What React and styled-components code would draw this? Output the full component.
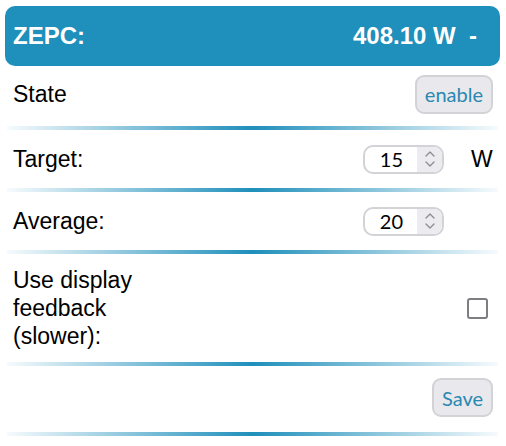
import React from "react";
import styled, { createGlobalStyle } from "styled-components";

const Global = createGlobalStyle`
  html, body { margin: 0; padding: 0; background: #ffffff; }
  body { font-family: "Liberation Sans", Arial, sans-serif; color: #000; }
`;

const Page = styled.div`
  padding: 6px 6px 0 5px;
  display: flex;
  flex-direction: column;
`;

const Header = styled.div`
  height: 60px;
  background: #1f8fbb;
  border-radius: 10px;
  color: #fff;
  font-weight: bold;
  font-size: 24px;
  display: flex;
  align-items: center;
  justify-content: space-between;
  padding: 0 23px 0 8px;
  white-space: pre;
`;

const Row = styled.div`
  height: ${(p) => p.$h}px;
  padding: ${(p) => p.$pad || "0"};
  box-sizing: border-box;
  display: flex;
  align-items: center;
  justify-content: space-between;
  padding-left: 8px;
  padding-right: 7px;
`;

const Label = styled.div`
  font-size: 23px;
  line-height: 28px;
  max-width: 150px;
`;

const Separator = styled.div`
  height: 4px;
  margin: 0 2px;
  background: linear-gradient(
    to right,
    rgba(31, 143, 187, 0.04),
    #1f8fbb 50%,
    rgba(31, 143, 187, 0.04)
  );
`;

const Button = styled.button`
  height: 39px;
  padding: 0 8px;
  border: 2px solid #d3d3d7;
  border-radius: 9px;
  background: #e9e9ed;
  color: #2a88b2;
  font-family: Lato, "Open Sans", sans-serif;
  font-size: 20px;
  cursor: pointer;
`;

const Controls = styled.div`
  display: flex;
  align-items: center;
`;

const NumberBox = styled.div`
  width: 81px;
  height: 29px;
  box-sizing: border-box;
  border: 2px solid #d3d3d7;
  border-radius: 10px;
  display: flex;
  overflow: hidden;
  background: #fff;
`;

const NumberField = styled.input`
  flex: 1;
  min-width: 0;
  border: none;
  outline: none;
  background: transparent;
  text-align: right;
  padding: 0 14px 0 0;
  font-family: Lato, "Open Sans", sans-serif;
  font-size: 20px;
  color: #000;
`;

const Spinner = styled.div`
  width: 25px;
  background: #ececf0;
  display: flex;
  align-items: center;
  justify-content: center;
`;

const Unit = styled.div`
  width: 22px;
  margin-left: 27px;
  font-size: 23px;
`;

const Check = styled.input`
  appearance: none;
  -webkit-appearance: none;
  width: 21px;
  height: 21px;
  margin: 0 5px 0 0;
  box-sizing: border-box;
  border: 2.5px solid #7d7d82;
  border-radius: 3px;
  background: #fff;
`;

function SpinIcon() {
  return (
    <svg width="14" height="22" viewBox="0 0 14 22" fill="none">
      <path d="M3 8 L7 4 L11 8" stroke="#8c8c90" strokeWidth="1.3" strokeLinecap="round" strokeLinejoin="round" />
      <path d="M3 14 L7 18 L11 14" stroke="#8c8c90" strokeWidth="1.3" strokeLinecap="round" strokeLinejoin="round" />
    </svg>
  );
}

function NumberInput({ value }) {
  return (
    <NumberBox>
      <NumberField type="text" defaultValue={value} readOnly />
      <Spinner>
        <SpinIcon />
      </Spinner>
    </NumberBox>
  );
}

export default function App() {
  return (
    <>
      <Global />
      <Page>
        <Header>
          <span>ZEPC:</span>
          <span>408.10 W  -</span>
        </Header>

        <Row $h={60} $pad="0 0 4px 0">
          <Label>State</Label>
          <Button>enable</Button>
        </Row>
        <Separator />

        <Row $h={58}>
          <Label>Target:</Label>
          <Controls>
            <NumberInput value="15" />
            <Unit>W</Unit>
          </Controls>
        </Row>
        <Separator />

        <Row $h={58}>
          <Label>Average:</Label>
          <Controls>
            <NumberInput value="20" />
            <Unit />
          </Controls>
        </Row>
        <Separator />

        <Row $h={108}>
          <Label>Use display feedback (slower):</Label>
          <Check type="checkbox" />
        </Row>
        <Separator />

        <Row $h={66} $pad="0 0 3px 0">
          <span />
          <Button>Save</Button>
        </Row>
        <Separator />
      </Page>
    </>
  );
}
